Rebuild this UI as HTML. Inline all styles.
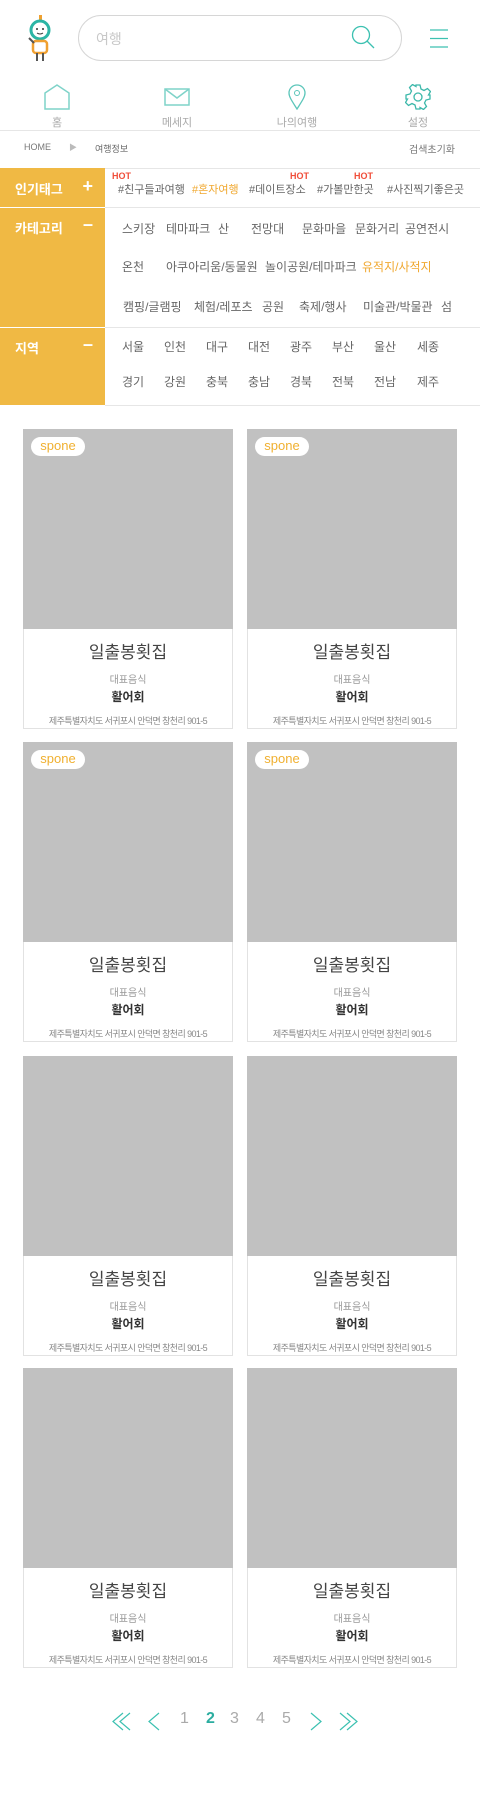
<!DOCTYPE html>
<html><head><meta charset="utf-8">
<style>
*{margin:0;padding:0;box-sizing:border-box}
body{width:480px;height:1817px;background:#fff;font-family:"Liberation Sans","Noto Sans CJK KR",sans-serif;position:relative;overflow:hidden;color:#555}
.abs{position:absolute}
.search{left:78px;top:15px;width:324px;height:46px;border:1px solid #d6d6d6;border-radius:23px}
.search span{position:absolute;left:17px;top:13px;font-size:14px;color:#c8c8c8}
.nav{top:84px;width:120px;text-align:center;font-size:11px;color:#aaa}
.nav svg{display:block;margin:0 auto 4px}
.hr{left:0;width:480px;height:1px;background:#e6e6e6}
.side{left:0;width:105px;background:#f0b944;color:#fff;font-weight:bold;font-size:13px}
.side b{position:absolute;right:12px;font-size:18px}
.t{position:absolute;font-size:12px;color:#666;white-space:nowrap}
.hot{position:absolute;font-size:9px;color:#f04e3a;font-weight:bold}
.card{position:absolute;width:210px;height:300px;border:1px solid #e2e2e2;background:#fff}
.card .img{height:200px;background:#c1c1c1;margin:-1px -1px 0 -1px;position:relative}
.badge{position:absolute;left:8px;top:8px;width:54px;height:19px;border-radius:10px;background:#fff;color:#f0b030;font-size:13px;text-align:center;line-height:18px}
.c1{text-align:center;font-size:17px;color:#444;margin-top:9px}
.c2{text-align:center;font-size:10px;color:#999;margin-top:8px}
.c3{text-align:center;font-size:12px;color:#333;margin-top:2px;font-weight:bold}
.c4{text-align:center;font-size:9px;color:#888;margin-top:9px;letter-spacing:-.6px}
.pg{top:1710px;font-size:16px;color:#aaa}
</style></head><body>
<svg class="abs" style="left:27px;top:14px" width="26" height="48" viewBox="0 0 26 48">
<rect x="12" y="1" width="3" height="5" fill="#f0a030"/>
<circle cx="13" cy="16" r="9" fill="none" stroke="#2bb5a5" stroke-width="3"/>
<circle cx="10" cy="15" r="1" fill="#333"/><circle cx="16" cy="15" r="1" fill="#333"/>
<path d="M10 19 Q13 21 16 19" stroke="#333" fill="none"/>
<rect x="6" y="27" width="14" height="12" rx="3" fill="none" stroke="#f0a030" stroke-width="2.5"/>
<path d="M2 24 L7 29" stroke="#555" stroke-width="2"/>
<path d="M10 39v8M16 39v8" stroke="#555" stroke-width="2"/></svg>
<div class="abs search"><span>여행</span>
<svg class="abs" style="left:272px;top:9px" width="26" height="26" viewBox="0 0 26 26"><circle cx="10" cy="10" r="8.5" fill="none" stroke="#3cc1b1" stroke-width="1.3"/><path d="M16 16l7 7" stroke="#3cc1b1" stroke-width="1.3"/></svg></div>
<svg class="abs" style="left:430px;top:29px" width="18" height="19"><path d="M0 1h18M0 9.5h18M0 18h18" stroke="#3cc1b1" stroke-width="1.3"/></svg>

<div class="abs nav" style="left:-3px"><svg width="26" height="26" viewBox="0 0 26 26"><path d="M1 9L13 1L25 9V25H1Z" fill="none" stroke="#7fd3c9" stroke-width="1.5"/></svg>홈</div>
<div class="abs nav" style="left:117px"><svg width="26" height="26" viewBox="0 0 26 26"><rect x="1" y="5" width="24" height="16" fill="none" stroke="#7fd3c9" stroke-width="1.5"/><path d="M1 5l12 9l12-9" fill="none" stroke="#7fd3c9" stroke-width="1.5"/></svg>메세지</div>
<div class="abs nav" style="left:237px"><svg width="26" height="26" viewBox="0 0 26 26"><path d="M13 25C8 17 5 13 5 9a8 8 0 0 1 16 0c0 4-3 8-8 16Z" fill="none" stroke="#5cc6ba" stroke-width="1.3"/><circle cx="13" cy="9" r="2.5" fill="none" stroke="#5cc6ba"/></svg>나의여행</div>
<div class="abs nav" style="left:358px"><svg width="26" height="26" viewBox="0 0 26 26"><g fill="none" stroke="#3cb8aa" stroke-width="1.3"><circle cx="13" cy="13" r="4"/><path d="M11 1h4l1 4 3 1.5 3.5-2 3 3-2 3.5L25 11v4l-4 1-1.5 3 2 3.5-3 3-3.5-2L15 25h-4l-1-4-3-1.5-3.5 2-3-3 2-3.5L1 15v-4l4-1 1.5-3-2-3.5 3-3 3.5 2L11 1Z"/></g></svg>설정</div>
<div class="abs hr" style="top:130px"></div>
<div class="abs" style="left:24px;top:142px;font-size:9px;color:#777">HOME</div>
<div class="abs" style="left:69px;top:142px;font-size:8px;color:#bbb">▶</div>
<div class="abs" style="left:95px;top:142px;font-size:9px;color:#666">여행정보</div>
<div class="abs" style="left:409px;top:141px;font-size:10px;color:#777">검색초기화</div>
<div class="abs hr" style="top:168px"></div>

<div class="abs side" style="top:168px;height:39px"><span class="abs" style="left:15px;top:11px">인기태그</span><b style="top:8px">+</b></div>
<div class="abs side" style="top:208px;height:119px"><span class="abs" style="left:15px;top:10px">카테고리</span><b style="top:6px">–</b></div>
<div class="abs side" style="top:328px;height:77px"><span class="abs" style="left:15px;top:10px">지역</span><b style="top:6px">–</b></div>
<div class="abs hr" style="left:105px;width:375px;top:207px"></div>
<div class="abs hr" style="left:105px;width:375px;top:327px"></div>
<div class="abs hr" style="left:105px;width:375px;top:405px"></div>

<span class="hot" style="left:112px;top:171px">HOT</span><span class="hot" style="left:290px;top:171px">HOT</span><span class="hot" style="left:354px;top:171px">HOT</span>
<span class="t" style="left:118px;top:181px;font-size:11px">#친구들과여행</span>
<span class="t" style="left:192px;top:181px;font-size:11px;color:#f0a830">#혼자여행</span>
<span class="t" style="left:249px;top:181px;font-size:11px">#데이트장소</span>
<span class="t" style="left:317px;top:181px;font-size:11px">#가볼만한곳</span>
<span class="t" style="left:387px;top:181px;font-size:11px">#사진찍기좋은곳</span>

<span class="t" style="left:122px;top:220px">스키장</span><span class="t" style="left:166px;top:220px">테마파크</span><span class="t" style="left:218px;top:220px">산</span><span class="t" style="left:251px;top:220px">전망대</span><span class="t" style="left:302px;top:220px">문화마을</span><span class="t" style="left:355px;top:220px">문화거리</span><span class="t" style="left:405px;top:220px">공연전시</span>
<span class="t" style="left:122px;top:258px">온천</span><span class="t" style="left:166px;top:258px">아쿠아리움/동물원</span><span class="t" style="left:265px;top:258px">놀이공원/테마파크</span><span class="t" style="left:362px;top:258px;color:#f0a830">유적지/사적지</span>
<span class="t" style="left:123px;top:298px">캠핑/글램핑</span><span class="t" style="left:194px;top:298px">체험/레포츠</span><span class="t" style="left:262px;top:298px">공원</span><span class="t" style="left:299px;top:298px">축제/행사</span><span class="t" style="left:363px;top:298px">미술관/박물관</span><span class="t" style="left:441px;top:298px">섬</span>
<span class="t" style="left:122px;top:338px">서울</span><span class="t" style="left:164px;top:338px">인천</span><span class="t" style="left:206px;top:338px">대구</span><span class="t" style="left:248px;top:338px">대전</span><span class="t" style="left:290px;top:338px">광주</span><span class="t" style="left:332px;top:338px">부산</span><span class="t" style="left:374px;top:338px">울산</span><span class="t" style="left:417px;top:338px">세종</span>
<span class="t" style="left:122px;top:373px">경기</span><span class="t" style="left:164px;top:373px">강원</span><span class="t" style="left:206px;top:373px">충북</span><span class="t" style="left:248px;top:373px">충남</span><span class="t" style="left:290px;top:373px">경북</span><span class="t" style="left:332px;top:373px">전북</span><span class="t" style="left:374px;top:373px">전남</span><span class="t" style="left:417px;top:373px">제주</span>

<div class="card" style="left:23px;top:429px"><div class="img"><div class="badge">spone</div></div><div class="c1">일출봉횟집</div><div class="c2">대표음식</div><div class="c3">활어회</div><div class="c4">제주특별자치도 서귀포시 안덕면 창천리 901-5</div></div>
<div class="card" style="left:247px;top:429px"><div class="img"><div class="badge">spone</div></div><div class="c1">일출봉횟집</div><div class="c2">대표음식</div><div class="c3">활어회</div><div class="c4">제주특별자치도 서귀포시 안덕면 창천리 901-5</div></div>
<div class="card" style="left:23px;top:742px"><div class="img"><div class="badge">spone</div></div><div class="c1">일출봉횟집</div><div class="c2">대표음식</div><div class="c3">활어회</div><div class="c4">제주특별자치도 서귀포시 안덕면 창천리 901-5</div></div>
<div class="card" style="left:247px;top:742px"><div class="img"><div class="badge">spone</div></div><div class="c1">일출봉횟집</div><div class="c2">대표음식</div><div class="c3">활어회</div><div class="c4">제주특별자치도 서귀포시 안덕면 창천리 901-5</div></div>
<div class="card" style="left:23px;top:1056px"><div class="img"></div><div class="c1">일출봉횟집</div><div class="c2">대표음식</div><div class="c3">활어회</div><div class="c4">제주특별자치도 서귀포시 안덕면 창천리 901-5</div></div>
<div class="card" style="left:247px;top:1056px"><div class="img"></div><div class="c1">일출봉횟집</div><div class="c2">대표음식</div><div class="c3">활어회</div><div class="c4">제주특별자치도 서귀포시 안덕면 창천리 901-5</div></div>
<div class="card" style="left:23px;top:1368px"><div class="img"></div><div class="c1">일출봉횟집</div><div class="c2">대표음식</div><div class="c3">활어회</div><div class="c4">제주특별자치도 서귀포시 안덕면 창천리 901-5</div></div>
<div class="card" style="left:247px;top:1368px"><div class="img"></div><div class="c1">일출봉횟집</div><div class="c2">대표음식</div><div class="c3">활어회</div><div class="c4">제주특별자치도 서귀포시 안덕면 창천리 901-5</div></div>

<svg class="abs" style="left:112px;top:1712px" width="200" height="20"><g fill="none" stroke="#3cc1b1" stroke-width="1.2"><path d="M11 1L1 9.5L11 18M18 1L8 9.5L18 18"/><path d="M47 1L37 9.5L47 18"/></g></svg>
<span class="abs pg" style="left:180px">1</span>
<span class="abs pg" style="left:206px;color:#2bada0;font-weight:bold">2</span>
<span class="abs pg" style="left:230px">3</span>
<span class="abs pg" style="left:256px">4</span>
<span class="abs pg" style="left:282px">5</span>
<svg class="abs" style="left:310px;top:1712px" width="60" height="20"><g fill="none" stroke="#3cc1b1" stroke-width="1.2"><path d="M1 1L11 9.5L1 18"/><path d="M30 1L40 9.5L30 18M37 1L47 9.5L37 18"/></g></svg>
</body></html>
